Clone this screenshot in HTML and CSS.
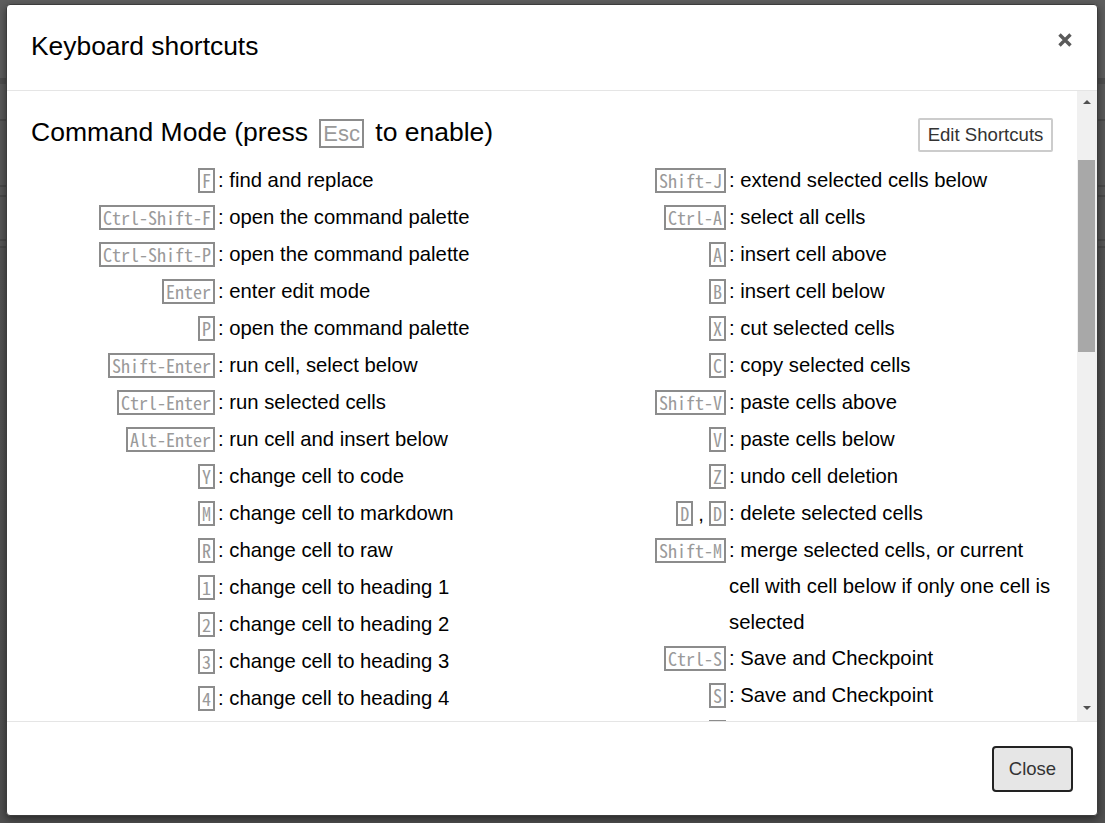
FILE: index.html
```html
<!DOCTYPE html>
<html lang="en">
<head>
<meta charset="utf-8">
<title>Keyboard shortcuts</title>
<link rel="stylesheet" href="styles.css">
</head>
<body>
<div class="modal">
  <div class="modal-header">
    <h4 class="title">Keyboard shortcuts</h4>
    <button class="x-btn" aria-label="Close">
      <svg width="14" height="14" viewBox="0 0 14 14"><path d="M1.5 1.5 L12.5 12.5 M12.5 1.5 L1.5 12.5" stroke="#5a5a5a" stroke-width="3.4" fill="none"/></svg>
    </button>
  </div>
  <div class="modal-body">
    <div class="content">
      <div class="section-head">
        <h4 class="mode-title">Command Mode (press <kbd class="big">Esc</kbd> to enable)</h4>
        <button class="btn-edit">Edit Shortcuts</button>
      </div>
      <div class="columns">
        <div class="col">
          <div class="row"><span class="keys"><kbd>F</kbd></span><span class="desc">: find and replace</span></div>
          <div class="row"><span class="keys"><kbd>Ctrl-Shift-F</kbd></span><span class="desc">: open the command palette</span></div>
          <div class="row"><span class="keys"><kbd>Ctrl-Shift-P</kbd></span><span class="desc">: open the command palette</span></div>
          <div class="row"><span class="keys"><kbd>Enter</kbd></span><span class="desc">: enter edit mode</span></div>
          <div class="row"><span class="keys"><kbd>P</kbd></span><span class="desc">: open the command palette</span></div>
          <div class="row"><span class="keys"><kbd>Shift-Enter</kbd></span><span class="desc">: run cell, select below</span></div>
          <div class="row"><span class="keys"><kbd>Ctrl-Enter</kbd></span><span class="desc">: run selected cells</span></div>
          <div class="row"><span class="keys"><kbd>Alt-Enter</kbd></span><span class="desc">: run cell and insert below</span></div>
          <div class="row"><span class="keys"><kbd>Y</kbd></span><span class="desc">: change cell to code</span></div>
          <div class="row"><span class="keys"><kbd>M</kbd></span><span class="desc">: change cell to markdown</span></div>
          <div class="row"><span class="keys"><kbd>R</kbd></span><span class="desc">: change cell to raw</span></div>
          <div class="row"><span class="keys"><kbd>1</kbd></span><span class="desc">: change cell to heading 1</span></div>
          <div class="row"><span class="keys"><kbd>2</kbd></span><span class="desc">: change cell to heading 2</span></div>
          <div class="row"><span class="keys"><kbd>3</kbd></span><span class="desc">: change cell to heading 3</span></div>
          <div class="row"><span class="keys"><kbd>4</kbd></span><span class="desc">: change cell to heading 4</span></div>
        </div>
        <div class="col">
          <div class="row"><span class="keys"><kbd>Shift-J</kbd></span><span class="desc">: extend selected cells below</span></div>
          <div class="row"><span class="keys"><kbd>Ctrl-A</kbd></span><span class="desc">: select all cells</span></div>
          <div class="row"><span class="keys"><kbd>A</kbd></span><span class="desc">: insert cell above</span></div>
          <div class="row"><span class="keys"><kbd>B</kbd></span><span class="desc">: insert cell below</span></div>
          <div class="row"><span class="keys"><kbd>X</kbd></span><span class="desc">: cut selected cells</span></div>
          <div class="row"><span class="keys"><kbd>C</kbd></span><span class="desc">: copy selected cells</span></div>
          <div class="row"><span class="keys"><kbd>Shift-V</kbd></span><span class="desc">: paste cells above</span></div>
          <div class="row"><span class="keys"><kbd>V</kbd></span><span class="desc">: paste cells below</span></div>
          <div class="row"><span class="keys"><kbd>Z</kbd></span><span class="desc">: undo cell deletion</span></div>
          <div class="row"><span class="keys"><kbd>D</kbd><span class="sep">,</span><kbd>D</kbd></span><span class="desc">: delete selected cells</span></div>
          <div class="row"><span class="keys"><kbd>Shift-M</kbd></span><span class="desc">: merge selected cells, or current cell with cell below if only one cell is selected</span></div>
          <div class="row"><span class="keys"><kbd>Ctrl-S</kbd></span><span class="desc">: Save and Checkpoint</span></div>
          <div class="row"><span class="keys"><kbd>S</kbd></span><span class="desc">: Save and Checkpoint</span></div>
          <div class="row"><span class="keys"><kbd class="cut"></kbd></span></div>
        </div>
      </div>
    </div>
    <div class="scrollbar">
      <div class="sb-btn"><span class="tri-up"></span></div>
      <div class="sb-track"><div class="sb-thumb"></div></div>
      <div class="sb-btn"><span class="tri-down"></span></div>
    </div>
  </div>
  <div class="modal-footer">
    <button class="btn-close">Close</button>
  </div>
</div>
</body>
</html>
```

FILE: styles.css
```css
* { box-sizing: border-box; }

html, body { margin: 0; }

body {
  width: 1105px;
  height: 823px;
  overflow: hidden;
  padding: 4px 0 0 6px;
  font-family: "Liberation Sans", Arial, sans-serif;
  background-color: #585858;
  background-image: linear-gradient(to bottom,
    #5e5e5e 0, #5e5e5e 78px,
    #4e4e4e 78px, #4e4e4e 84px,
    #5a5a5a 84px, #5a5a5a 119px,
    #4a4a4a 119px, #4a4a4a 121px,
    #585858 121px, #585858 185px,
    #4a4a4a 185px, #4a4a4a 187px,
    #585858 187px, #585858 195px,
    #4a4a4a 195px, #4a4a4a 197px,
    #575757 197px, #575757 239px,
    #4a4a4a 239px, #4a4a4a 241px,
    #575757 241px, #575757 246px,
    #4a4a4a 246px, #4a4a4a 248px,
    #545454 248px, #505050 823px);
}

.modal {
  width: 1092px;
  height: 812px;
  background: #fff;
  border: 1px solid #3c3c3c;
  border-radius: 4px;
  box-shadow: 0 3px 9px rgba(0, 0, 0, 0.5);
  display: flex;
  flex-direction: column;
  overflow: hidden;
}

.modal-header {
  flex: 0 0 86px;
  border-bottom: 1px solid #e5e5e5;
  display: flex;
  align-items: center;
  justify-content: space-between;
  padding: 0 24px 2px 24px;
}

.title {
  margin: 0;
  font-size: 26.4px;
  font-weight: normal;
  color: #000;
}

.x-btn {
  align-self: flex-start;
  margin-top: 28px;
  margin-right: 1px;
  padding: 0;
  border: 0;
  background: none;
  width: 14px;
  height: 14px;
  display: block;
}

.x-btn svg { display: block; }

.modal-body {
  flex: 1;
  min-height: 0;
  display: flex;
}

.content {
  flex: 1;
  min-width: 0;
  padding: 21px 24px 0 24px;
  overflow: hidden;
}

.section-head {
  display: flex;
  justify-content: space-between;
  align-items: flex-end;
  height: 40px;
  margin-bottom: 10px;
}

.mode-title {
  margin: 0;
  font-size: 26.5px;
  font-weight: normal;
  line-height: 40px;
  color: #000;
}

kbd {
  display: inline-block;
  font-family: "Noto Sans Mono CJK JP", "Liberation Mono", monospace;
  font-size: 18px;
  color: #9a9a9a;
  border: 2px solid #8c8c8c;
  padding: 0 2px;
  height: 25px;
  line-height: 21px;
}

kbd.cut {
  width: 17px;
}

kbd.big {
  font-family: "Liberation Sans", Arial, sans-serif;
  font-size: 22px;
  color: #9a9a9a;
  height: 29px;
  line-height: 25px;
  padding: 0 2px;
  margin: 0 4px;
}

.btn-edit {
  font-family: "Liberation Sans", Arial, sans-serif;
  font-size: 18.6px;
  color: #333;
  background: #fff;
  border: 2px solid #cccccc;
  border-radius: 2px;
  width: 135px;
  height: 34px;
  padding: 0;
}

.columns {
  display: flex;
}

.col {
  flex: 1 1 0;
  min-width: 0;
}

.row {
  display: flex;
  align-items: flex-start;
  font-size: 20.3px;
  color: #000;
}

.keys {
  flex: 0 0 187px;
  height: 37px;
  padding-right: 3px;
  display: flex;
  justify-content: flex-end;
  align-items: center;
}

.sep {
  margin: 0 5px 0 5px;
  line-height: 23px;
  padding-top: 2px;
}

.desc {
  flex: 1;
  min-width: 0;
  line-height: 36px;
}

.scrollbar {
  flex: 0 0 20px;
  background: #f0f0f0;
  display: flex;
  flex-direction: column;
}

.sb-btn {
  flex: 0 0 22px;
  display: flex;
  align-items: center;
  justify-content: center;
}

.tri-up {
  width: 0;
  height: 0;
  border-left: 4px solid transparent;
  border-right: 4px solid transparent;
  border-bottom: 4px solid #505050;
  margin-right: 1px;
}

.tri-down {
  width: 0;
  height: 0;
  border-left: 4px solid transparent;
  border-right: 4px solid transparent;
  border-top: 4px solid #505050;
  margin-right: 1px;
  margin-bottom: 4px;
}

.sb-track {
  flex: 1;
}

.sb-thumb {
  margin-top: 47px;
  margin-left: 1px;
  width: 17px;
  height: 192px;
  background: #a8a8a8;
}

.modal-footer {
  flex: 0 0 94px;
  border-top: 1px solid #e5e5e5;
  display: flex;
  justify-content: flex-end;
  align-items: flex-start;
  padding: 24px 24px 0 24px;
}

.btn-close {
  font-family: "Liberation Sans", Arial, sans-serif;
  font-size: 18.5px;
  color: #333;
  background: #e6e6e6;
  border: 2px solid #222;
  border-radius: 4px;
  width: 81px;
  height: 46px;
  padding: 0;
}
```
